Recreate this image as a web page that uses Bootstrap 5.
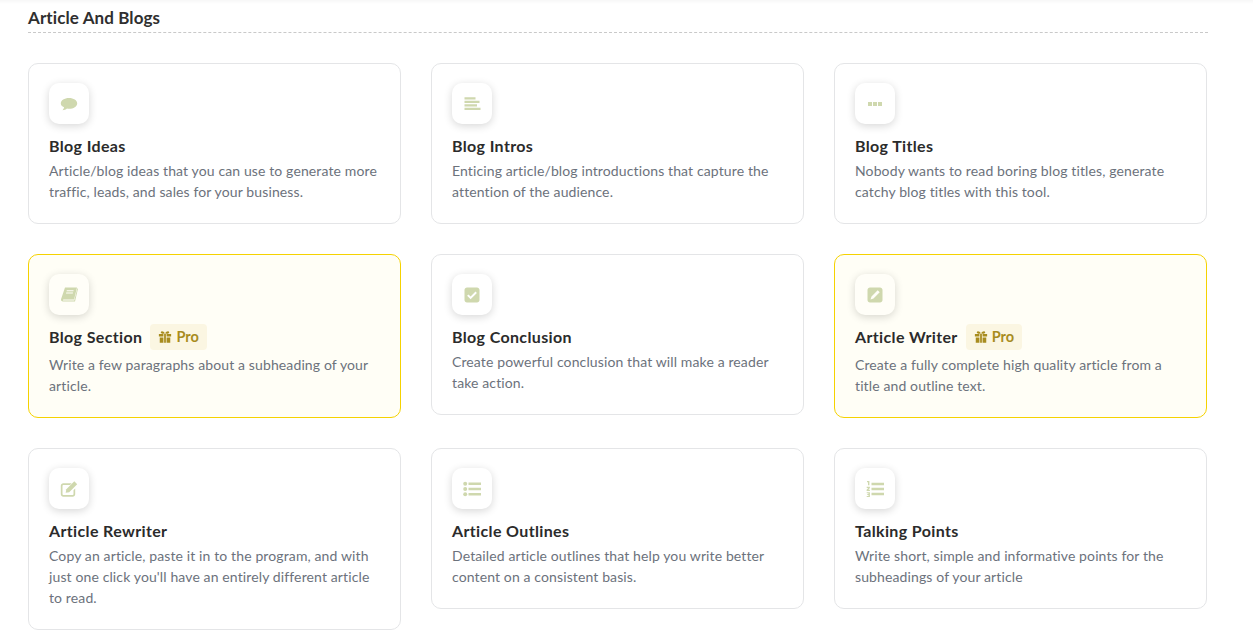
<!DOCTYPE html>
<html lang="en">
<head>
<meta charset="utf-8">
<title>Article And Blogs</title>
<link rel="stylesheet" href="https://cdn.jsdelivr.net/npm/bootstrap@5.3.0/dist/css/bootstrap.min.css">
<style>
body{font-family:"Lato","Noto Sans",sans-serif;background:#fff;color:#2b2b2b;overflow:hidden}
.top-fade{height:4px;background:linear-gradient(#f7f7f7,#fff)}
.page-wrap{padding:0 46px 0 28px}
.sect-head{font-size:17px;font-weight:700;line-height:22px;color:#2f2f2f;padding:3px 0 3px;border-bottom:1px dashed #c9c9c9;margin-bottom:30px;margin-right:-1px;letter-spacing:.1px}
.tool-row{--bs-gutter-x:30px;--bs-gutter-y:30px}
.tool-card{border:1px solid #e4e5e7;border-radius:10px;background:#fff;padding:19px 20px 21px}
.tool-card.is-pro{background:#fffef6;border-color:#f5d200}
.tool-ico{width:40px;height:41px;border-radius:10px;background:#fff;box-shadow:0 2px 8px rgba(0,0,0,.16);margin-bottom:10px}
.is-pro .tool-ico{background:#fffef8;margin-bottom:9px}
.tool-ico svg{width:18px;height:18px;fill:#cfd8ae}
.tool-name{font-size:16px;font-weight:700;line-height:24px;color:#2b2b2b;margin:0;letter-spacing:.36px}
.tool-desc{font-size:14px;line-height:21px;color:#6c727c;margin:2px 0 0;letter-spacing:.12px}
.pro-tag{height:26px;padding:0 8px;background:#fbf6e2;color:#a88c1e;border-radius:4px;font-size:14.5px;font-weight:700;margin-left:8px}
.pro-tag svg{width:14px;height:14px;fill:#a88c1e}
.is-pro .tool-desc{margin-top:4px}
</style>
</head>
<body>
<div class="top-fade"></div>
<div class="page-wrap">
<div class="sect-head">Article And Blogs</div>
<div class="row tool-row align-items-start">

<div class="col-4"><div class="tool-card">
<div class="tool-ico d-flex align-items-center justify-content-center"><svg viewBox="0 0 18 18"><path d="M9 3c4.500 0 8.200 2.400 8.200 5.400s-3.700 5.400-8.200 5.400c-.7 0-1.300-.1-2-.2-1.100 1-2.800 1.600-4.500 1.600.8-.7 1.400-1.800 1.600-2.900C2 11.300.8 10 .8 8.400.8 5.400 4.500 3 9 3z"/></svg></div>
<h6 class="tool-name">Blog Ideas</h6>
<p class="tool-desc">Article/blog ideas that you can use to generate more traffic, leads, and sales for your business.</p>
</div></div>

<div class="col-4"><div class="tool-card">
<div class="tool-ico d-flex align-items-center justify-content-center"><svg viewBox="0 0 18 18"><path d="M1.500 2.200h11v2.300h-11zM1.500 5.700h15v2.300h-15zM1.500 9.200h12.500v2.300H1.500zM1.500 12.700h16v2.300h-16z"/></svg></div>
<h6 class="tool-name">Blog Intros</h6>
<p class="tool-desc">Enticing article/blog introductions that capture the attention of the audience.</p>
</div></div>

<div class="col-4"><div class="tool-card">
<div class="tool-ico d-flex align-items-center justify-content-center"><svg viewBox="0 0 18 18"><path d="M2 7h4v4H2zM7 7h4v4H7zM12 7h4v4h-4z"/></svg></div>
<h6 class="tool-name">Blog Titles</h6>
<p class="tool-desc">Nobody wants to read boring blog titles, generate catchy blog titles with this tool.</p>
</div></div>

<div class="col-4"><div class="tool-card is-pro">
<div class="tool-ico d-flex align-items-center justify-content-center"><svg viewBox="0 0 18 18"><path d="M5 1.500h12l-2.900 12H3.600c-.9 0-1 1.100-.2 1.100h10.900l3-12.300.7.500-3 12.700H3C1.500 15.500.7 14.200 1.100 13zM6.800 4.300l-.2 1h6.800l.2-1zM6.200 6.600l-.2 1h6.800l.2-1z"/></svg></div>
<div class="d-flex align-items-center"><h6 class="tool-name">Blog Section</h6><span class="pro-tag d-inline-flex align-items-center gap-1"><svg viewBox="0 0 16 16"><path d="M1 4.500h5.200v3H1zM9.800 4.500H15v3H9.800zM7 4.500h2v10H7zM2 8.500h4.200v6H2zM9.800 8.500H14v6H9.800zM8 4C6.500 1 3.500.5 3.200 2.500 3 4 5.500 4.500 8 4zm0 0c2.500.5 5 0 4.800-1.500C12.500.5 9.500 1 8 4z"/></svg>Pro</span></div>
<p class="tool-desc">Write a few paragraphs about a subheading of your article.</p>
</div></div>

<div class="col-4"><div class="tool-card">
<div class="tool-ico d-flex align-items-center justify-content-center"><svg viewBox="0 0 18 18"><path fill-rule="evenodd" d="M4 1.500h10c1.400 0 2.500 1.100 2.500 2.500v10c0 1.400-1.100 2.500-2.500 2.500H4c-1.400 0-2.500-1.100-2.500-2.500V4c0-1.400 1.100-2.500 2.500-2.500zm3.600 11.800 6.300-6.300-1.400-1.400-4.900 4.900-2.100-2.100-1.400 1.400z"/></svg></div>
<h6 class="tool-name">Blog Conclusion</h6>
<p class="tool-desc">Create powerful conclusion that will make a reader take action.</p>
</div></div>

<div class="col-4"><div class="tool-card is-pro">
<div class="tool-ico d-flex align-items-center justify-content-center"><svg viewBox="0 0 18 18"><path fill-rule="evenodd" d="M4 1.500h10c1.400 0 2.500 1.100 2.500 2.500v10c0 1.400-1.100 2.500-2.500 2.500H4c-1.400 0-2.500-1.100-2.500-2.500V4c0-1.400 1.100-2.500 2.500-2.500zm7.700 2.800-6.200 6.200-1 3 3-1 6.200-6.200z"/></svg></div>
<div class="d-flex align-items-center"><h6 class="tool-name">Article Writer</h6><span class="pro-tag d-inline-flex align-items-center gap-1"><svg viewBox="0 0 16 16"><path d="M1 4.500h5.200v3H1zM9.800 4.500H15v3H9.800zM7 4.500h2v10H7zM2 8.500h4.200v6H2zM9.800 8.500H14v6H9.800zM8 4C6.500 1 3.500.5 3.200 2.500 3 4 5.500 4.500 8 4zm0 0c2.500.5 5 0 4.800-1.500C12.500.5 9.500 1 8 4z"/></svg>Pro</span></div>
<p class="tool-desc">Create a fully complete high quality article from a title and outline text.</p>
</div></div>

<div class="col-4"><div class="tool-card">
<div class="tool-ico d-flex align-items-center justify-content-center"><svg viewBox="0 0 18 18"><path d="M3.300 3.200h8.400L10 4.900H3.300c-.4 0-.8.400-.8.800v8.500c0 .4.400.8.800.8h9.400c.4 0 .8-.4.800-.8v-4l1.700-1.700v5.700c0 1.300-1.100 2.500-2.500 2.500H3.300C2 16.700.8 15.500.8 14.200V5.700c0-1.300 1.200-2.500 2.500-2.500z"/><path d="M14.300 1.300l2.900 2.900-8 8-3.500.6.600-3.500z"/></svg></div>
<h6 class="tool-name">Article Rewriter</h6>
<p class="tool-desc">Copy an article, paste it in to the program, and with just one click you'll have an entirely different article to read.</p>
</div></div>

<div class="col-4"><div class="tool-card">
<div class="tool-ico d-flex align-items-center justify-content-center"><svg viewBox="0 0 18 18"><circle cx="2.200" cy="3.800" r="2"/><circle cx="2.200" cy="9" r="2"/><circle cx="2.200" cy="14.200" r="2"/><path d="M5.500 2.600h12.500v2.500H5.500zM5.500 7.800h12.500v2.500H5.500zM5.500 13h12.500v2.500H5.500z"/></svg></div>
<h6 class="tool-name">Article Outlines</h6>
<p class="tool-desc">Detailed article outlines that help you write better content on a consistent basis.</p>
</div></div>

<div class="col-4"><div class="tool-card">
<div class="tool-ico d-flex align-items-center justify-content-center"><svg viewBox="0 0 18 18"><path d="M1 1h2.400v4.200H2V2.200H1zM.7 6.700h3.200v1.200L2.400 9.800h1.500V11H.6V9.800l1.600-1.900H.7zM.7 12.300h3.200V17H.7v-1.100h1.800v-.8H1.300v-1h1.200v-.8H.7zM5.500 2.800h12.500v2.500H5.500zM5.500 7.800h12.500v2.500H5.500zM5.500 12.800h12.500v2.500H5.500z"/></svg></div>
<h6 class="tool-name">Talking Points</h6>
<p class="tool-desc">Write short, simple and informative points for the subheadings of your article</p>
</div></div>

</div>
</div>
<script src="https://cdn.jsdelivr.net/npm/bootstrap@5.3.0/dist/js/bootstrap.bundle.min.js"></script>
</body>
</html>
